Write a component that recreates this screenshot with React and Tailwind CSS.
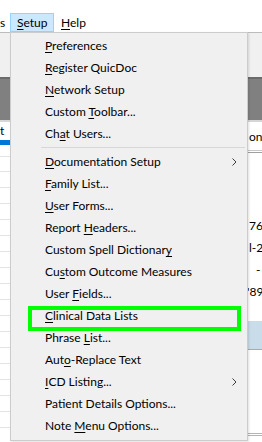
import React from 'react';

// '&' marks the access key, as in a Windows menu resource
const menuItems = [
  '&Preferences',
  '&Register QuicDoc',
  '&Network Setup',
  'Custom &Toolbar...',
  'Ch&at Users...',
  '-',
  { label: '&Documentation Setup', sub: true },
  '&Family List...',
  '&User Forms...',
  'Report &Headers...',
  'Custom Spell Dictionar&y',
  'Cu&stom Outcome Measures',
  'User &Fields...',
  '&Clinical Data Lists',
  'Phrase &List...',
  'Aut&o-Replace Text',
  { label: '&ICD Listing...', sub: true },
  'Patient Details Options...',
  'Note &Menu Options...',
];

const Label = ({ text }) => {
  const i = text.indexOf('&');
  if (i < 0) return <span>{text}</span>;
  return (
    <span>
      {text.slice(0, i)}
      <span className="underline underline-offset-[2px] decoration-1">{text[i + 1]}</span>
      {text.slice(i + 2)}
    </span>
  );
};

const Chevron = () => (
  <svg width="5" height="8" viewBox="0 0 5 8" className="ml-auto mr-[10px]">
    <polyline points="0.5,0.5 4,4 0.5,7.5" fill="none" stroke="#3c3c3c" strokeWidth="1" />
  </svg>
);

const SetupMenu = () => (
  <div className="absolute left-[10px] top-[32px] w-[238px] h-[409px] border border-[#cccccc] bg-[#f0f0f0] pt-[2px] shadow-[1px_1px_2px_rgba(0,0,0,0.12)]">
    {menuItems.map((item, idx) => {
      if (item === '-') {
        return (
          <div key={idx} className="h-[6px] pt-[2px] pl-[30px] pr-[2px]">
            <div className="h-px bg-[#d7d7d7]" />
          </div>
        );
      }
      const label = typeof item === 'string' ? item : item.label;
      const sub = typeof item !== 'string' && item.sub;
      return (
        <div key={idx} className="h-[22px] flex items-center pl-[34px] text-black">
          <Label text={label} />
          {sub && <Chevron />}
        </div>
      );
    })}
  </div>
);

const LeftPane = () => (
  <div className="w-[130px] shrink-0 flex flex-col">
    <div className="h-[18px] flex items-center text-black overflow-hidden">
      <span className="ml-0">t</span>
    </div>
    <div className="h-[5px] bg-[#0078d7]" />
    <div className="h-[12px] border-b border-[#e3e3e3]" />
    <div className="h-[15px] border-b border-[#e3e3e3]" />
    {Array.from({ length: 17 }).map((_, i) => (
      <div key={i} className="h-[16px] shrink-0 border-b border-[#e3e3e3]" />
    ))}
  </div>
);

const RightPane = () => (
  <div className="flex-1 min-w-0 overflow-hidden flex flex-col text-black">
    <div className="h-[28px] flex items-center pl-[119px] pt-[2px] whitespace-nowrap">on</div>
    <div className="h-px bg-[#c8c8c8]" />
    <div className="h-px bg-white" />
    <div className="h-px bg-[#a0a0a0]" />
    <div className="h-[62px]" />
    <div className="h-[22px] flex items-center pl-[119px] whitespace-nowrap">76</div>
    <div className="h-[22px] flex items-center pl-[119px] whitespace-nowrap">l-23</div>
    <div className="h-[22px] flex items-center pl-[126px] whitespace-nowrap">-</div>
    <div className="h-[22px] flex items-center pl-[117px] whitespace-nowrap">'89</div>
    <div className="h-[18px]" />
    <div className="h-[29px] bg-[#c9dcea] border-b border-[#a9a9a9]" />
    <div className="h-[83px]" />
    <div className="h-px bg-[#b4b4b4]" />
    <div className="h-px bg-white" />
    <div className="h-px bg-[#b4b4b4]" />
  </div>
);

export default function App() {
  return (
    <div
      className="relative w-[262px] h-[442px] overflow-hidden bg-white text-[12px] leading-none"
      style={{ fontFamily: "Lato, 'Noto Sans', sans-serif" }}
    >
      <div className="h-[13px]" />
      {/* menu bar */}
      <div className="h-[19px] flex items-center text-black">
        <span className="w-[10px]">s</span>
        <div className="h-[19px] w-[44px] flex items-center pl-[6px] border border-[#99d1ff] bg-[#cce8ff]">
          <Label text="&Setup" />
        </div>
        <div className="pl-[7px]">
          <Label text="&Help" />
        </div>
      </div>
      <div className="h-px bg-[#bcbcbc]" />
      {/* toolbar strip */}
      <div className="h-[44px] bg-[#f0f0f0]" />
      <div className="h-[2px] bg-[#6b6b6b]" />
      <div className="h-[41px] bg-[#808080]" />
      <div className="h-[2px] bg-[#d6d6d6]" />
      {/* lists */}
      <div className="flex">
        <LeftPane />
        <RightPane />
      </div>
      <SetupMenu />
      {/* callout box */}
      <div className="absolute left-[28px] top-[306px] w-[213px] h-[25px] border-4 border-[#00ff00]" />
    </div>
  );
}
